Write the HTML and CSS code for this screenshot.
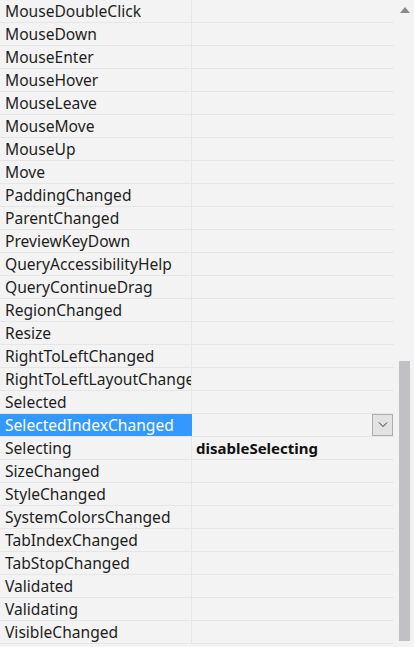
FILE: index.html
```html
<!DOCTYPE html>
<html lang="en">

<head>
    <meta charset="UTF-8">
    <meta name="viewport" content="width=device-width, initial-scale=1.0">
    <title>Events</title>

    <link rel="stylesheet" href="styles.css">
</head>

<body>
    <div class="pane">
        <div class="grid">
            <div class="row"><div class="name">MouseDoubleClick</div><div class="value"></div></div>
            <div class="row"><div class="name">MouseDown</div><div class="value"></div></div>
            <div class="row"><div class="name">MouseEnter</div><div class="value"></div></div>
            <div class="row"><div class="name">MouseHover</div><div class="value"></div></div>
            <div class="row"><div class="name">MouseLeave</div><div class="value"></div></div>
            <div class="row"><div class="name">MouseMove</div><div class="value"></div></div>
            <div class="row"><div class="name">MouseUp</div><div class="value"></div></div>
            <div class="row"><div class="name">Move</div><div class="value"></div></div>
            <div class="row"><div class="name">PaddingChanged</div><div class="value"></div></div>
            <div class="row"><div class="name">ParentChanged</div><div class="value"></div></div>
            <div class="row"><div class="name">PreviewKeyDown</div><div class="value"></div></div>
            <div class="row"><div class="name">QueryAccessibilityHelp</div><div class="value"></div></div>
            <div class="row"><div class="name">QueryContinueDrag</div><div class="value"></div></div>
            <div class="row"><div class="name">RegionChanged</div><div class="value"></div></div>
            <div class="row"><div class="name">Resize</div><div class="value"></div></div>
            <div class="row"><div class="name">RightToLeftChanged</div><div class="value"></div></div>
            <div class="row"><div class="name">RightToLeftLayoutChanged</div><div class="value"></div></div>
            <div class="row"><div class="name">Selected</div><div class="value"></div></div>
            <div class="row active">
                <div class="name">SelectedIndexChanged</div>
                <div class="value">
                    <span class="drop">
                        <svg width="10" height="6" viewBox="0 0 10 6">
                            <path d="M1 0.5 L5 4.5 L9 0.5" stroke="#333" stroke-width="1" fill="none"></path>
                        </svg>
                    </span>
                </div>
            </div>
            <div class="row"><div class="name">Selecting</div><div class="value bold">disableSelecting</div></div>
            <div class="row"><div class="name">SizeChanged</div><div class="value"></div></div>
            <div class="row"><div class="name">StyleChanged</div><div class="value"></div></div>
            <div class="row"><div class="name">SystemColorsChanged</div><div class="value"></div></div>
            <div class="row"><div class="name">TabIndexChanged</div><div class="value"></div></div>
            <div class="row"><div class="name">TabStopChanged</div><div class="value"></div></div>
            <div class="row"><div class="name">Validated</div><div class="value"></div></div>
            <div class="row"><div class="name">Validating</div><div class="value"></div></div>
            <div class="row"><div class="name">VisibleChanged</div><div class="value"></div></div>
        </div>

        <div class="scrollbar">
            <div class="arrow"></div>
            <div class="thumb"></div>
        </div>
    </div>
</body>

</html>
```

FILE: styles.css
```css
html,
body {
    margin: 0;
    padding: 0;
    background: #f3f3f3;
}

body {
    font-family: "Noto Sans", "Noto Sans CJK SC", sans-serif;
    font-size: 15.6px;
    color: #1e1e1e;
    overflow: hidden;
}

.pane {
    display: flex;
    height: 647px;
}

.grid {
    width: 394px;
}

.row {
    display: grid;
    grid-template-columns: 192px 1fr;
    height: 22px;
    border-bottom: 1px solid #e6e6e6;
}

.name {
    border-right: 1px solid #e6e6e6;
    padding-left: 5px;
    line-height: 22px;
    white-space: nowrap;
    overflow: hidden;
}

.value {
    padding-left: 4px;
    line-height: 22px;
    display: flex;
    justify-content: flex-end;
}

.value.bold {
    justify-content: flex-start;
    font-weight: bold;
    font-size: 15px;
    color: #111;
}

.row.active .name {
    background: #3399ff;
    color: #fff;
    border-right-color: #3399ff;
}

.drop {
    width: 19px;
    height: 20px;
    margin-right: 1px;
    background: #e3e3e3;
    border: 1px solid #adadad;
    display: flex;
    align-items: center;
    justify-content: center;
}

.scrollbar {
    width: 20px;
    display: flex;
    flex-direction: column;
    align-items: center;
}

.arrow {
    width: 0;
    height: 0;
    margin-top: 7px;
    margin-left: 1px;
    border-left: 5px solid transparent;
    border-right: 5px solid transparent;
    border-bottom: 6px solid #8a8a8a;
}

.thumb {
    width: 11px;
    height: 280px;
    margin-top: 348px;
    margin-left: 1px;
    background: #c1c1c5;
}
```
